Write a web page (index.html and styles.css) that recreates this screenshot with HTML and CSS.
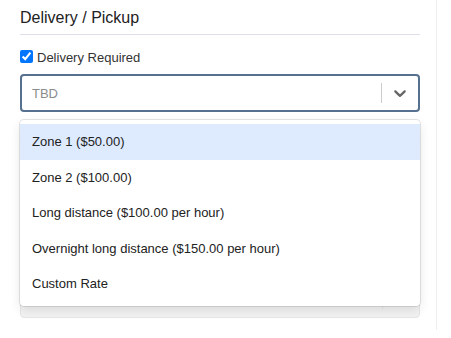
FILE: index.html
```html
<!DOCTYPE html>
<html lang="en">
<head>
    <meta charset="UTF-8">
    <meta name="viewport" content="width=device-width, initial-scale=1.0">
    <title>Delivery / Pickup</title>
    <link rel="stylesheet" href="styles.css">
</head>
<body>
    <div class="panel">
        <h3 class="panel-title">Delivery / Pickup</h3>

        <label class="check-row">
            <input type="checkbox" checked>
            <span>Delivery Required</span>
        </label>

        <!-- Rate select, opened -->
        <div class="select-wrap">
            <div class="select select-focused">
                <div class="select-value">TBD</div>
                <span class="select-sep"></span>
                <div class="select-arrow">
                    <svg width="20" height="20" viewBox="0 0 20 20"><path d="M4.516 7.548c0.436-0.446 1.043-0.481 1.576 0l3.908 3.747 3.908-3.747c0.533-0.481 1.141-0.446 1.574 0 0.436 0.445 0.408 1.197 0 1.615-0.406 0.418-4.695 4.502-4.695 4.502-0.217 0.223-0.502 0.335-0.787 0.335s-0.57-0.112-0.789-0.335c0 0-4.287-4.084-4.695-4.502s-0.436-1.17 0-1.615z"></path></svg>
                </div>
            </div>
            <div class="select-menu">
                <div class="option option-active">Zone 1 ($50.00)</div>
                <div class="option">Zone 2 ($100.00)</div>
                <div class="option">Long distance ($100.00 per hour)</div>
                <div class="option">Overnight long distance ($150.00 per hour)</div>
                <div class="option">Custom Rate</div>
            </div>
        </div>

        <div class="select select-disabled">
            <div class="select-value"></div>
            <span class="select-sep"></span>
            <div class="select-arrow"></div>
        </div>
    </div>
</body>
</html>
```

FILE: styles.css
```css
body {
    margin: 0;
    font-family: "Liberation Sans", Arial, sans-serif;
    color: #222;
    background: #fff;
}
.panel {
    width: 400px;
    padding: 9px 16px 12px 20px;
    border-right: 1px solid #eeeeee;
}
.panel-title {
    margin: 0;
    font-size: 16px;
    font-weight: normal;
    line-height: 18px;
    color: #222;
    padding-bottom: 7px;
    border-bottom: 1px solid #dedfe8;
}
.check-row {
    display: flex;
    align-items: center;
    margin-top: 14px;
    font-size: 13px;
    line-height: 15px;
    color: #333;
}
.check-row input {
    width: 13px;
    height: 13px;
    margin: 0 4px 0 0;
}
.check-row span {
    position: relative;
    top: 1px;
}
.select-wrap {
    position: relative;
    margin-top: 10px;
}
.select {
    display: flex;
    align-items: center;
    height: 38px;
    box-sizing: border-box;
    border-radius: 4px;
    font-size: 13px;
}
.select-focused {
    border: 2px solid #56708f;
    background: #fff;
}
.select-value {
    flex: 1;
    padding-left: 10px;
    color: #8c8c8c;
}
.select-sep {
    width: 1px;
    height: 20px;
    background: #cccccc;
}
.select-arrow {
    width: 36px;
    height: 20px;
    display: flex;
    justify-content: center;
    align-items: center;
}
.select-arrow svg {
    fill: #666;
}
.select-menu {
    position: absolute;
    top: calc(100% + 8px);
    left: 0;
    right: 0;
    padding: 4px 0;
    background: #fff;
    border-radius: 4px;
    box-shadow: 0 0 0 1px rgba(0, 0, 0, 0.1), 0 4px 11px rgba(0, 0, 0, 0.1);
    z-index: 2;
}
.option {
    padding: 8px 12px;
    font-size: 13px;
    line-height: 19.5px;
    color: #222;
}
.option-active {
    background: #deebff;
}
.select-disabled {
    margin-top: 168px;
    border: 1px solid #e6e6e6;
    background: #f2f2f2;
}
.select-disabled .select-sep {
    background: #e6e6e6;
}
```
